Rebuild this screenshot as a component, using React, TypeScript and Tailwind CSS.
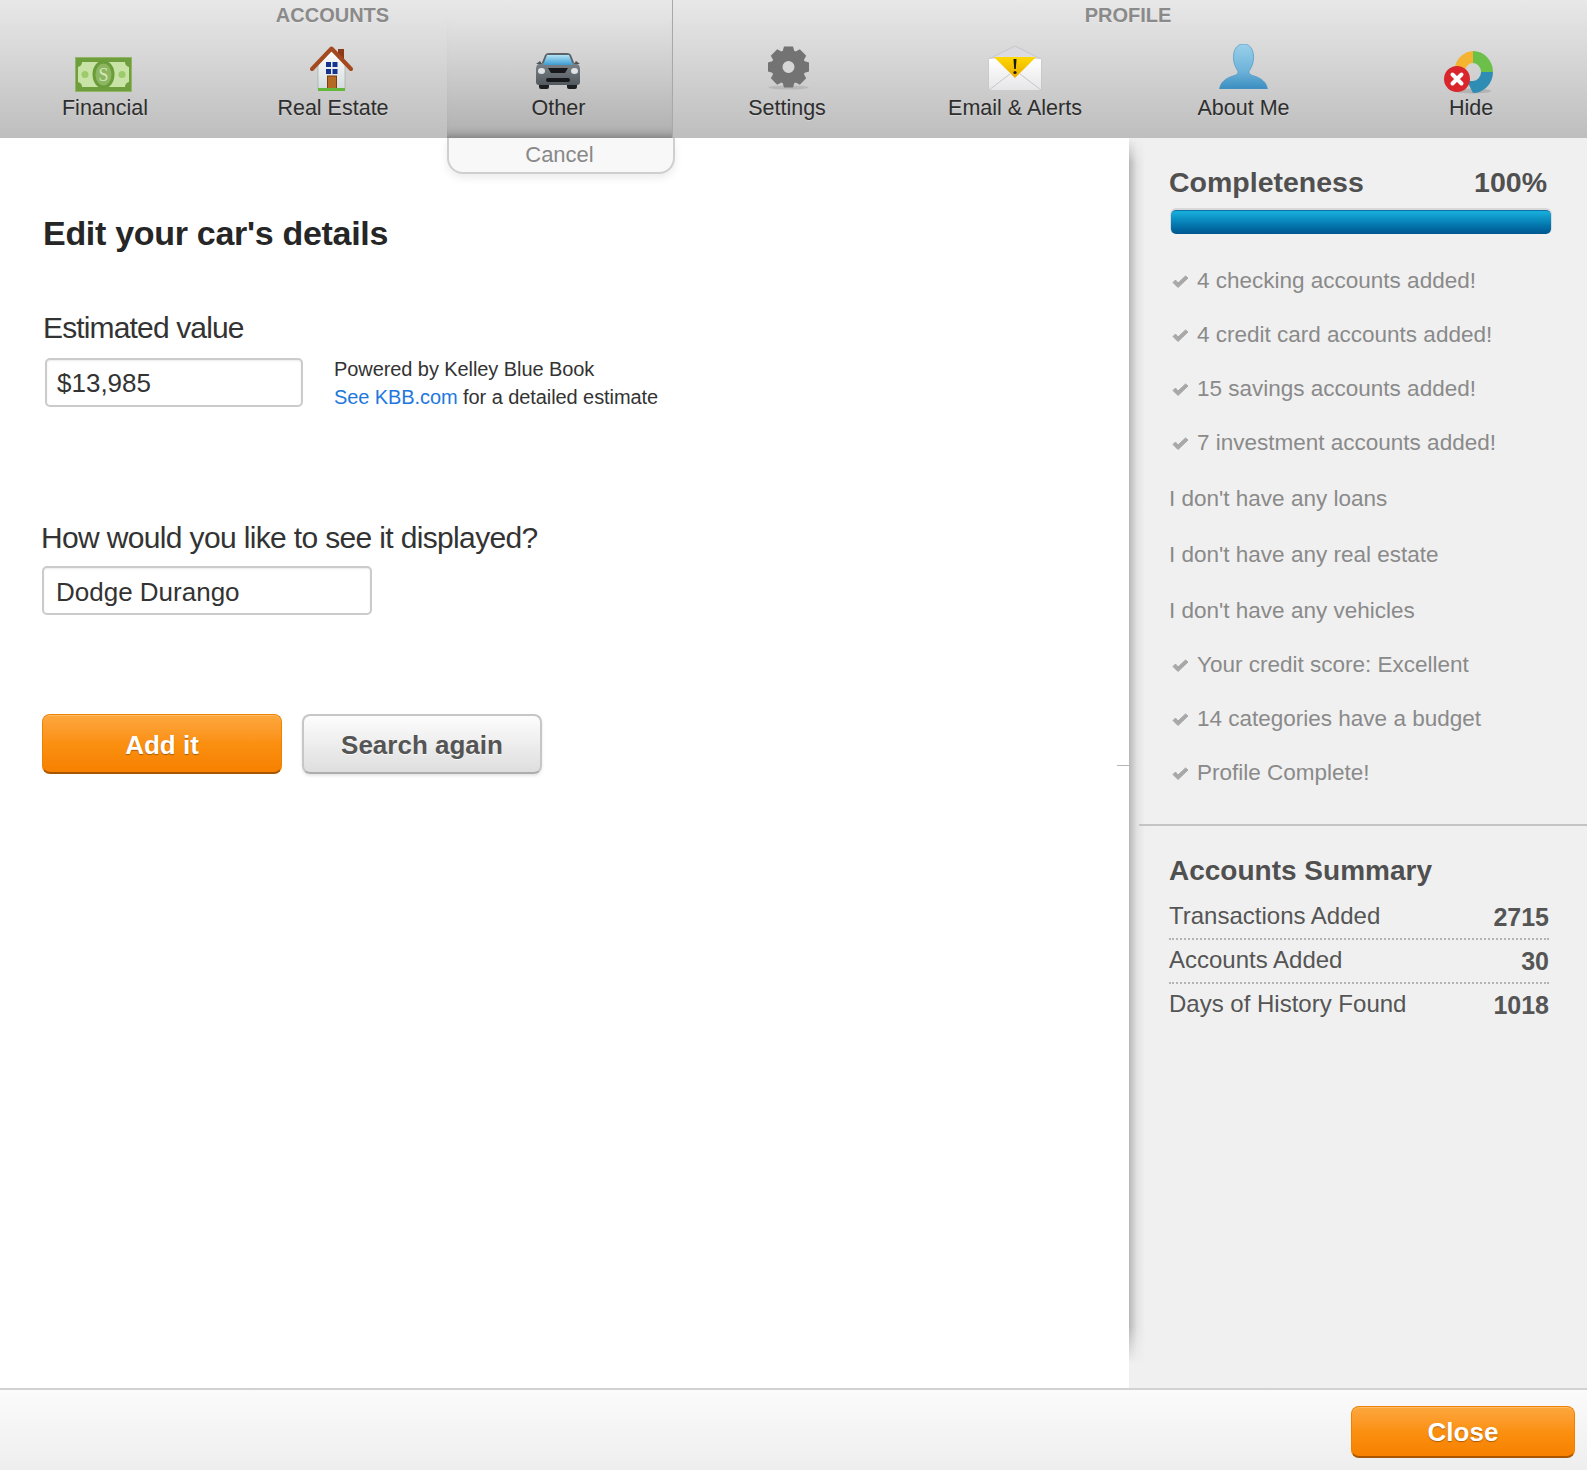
import React from "react";

const font = { fontFamily: '"Liberation Sans", Arial, sans-serif' };

function Money() {
  return (
    <svg width="57" height="35" viewBox="0 0 57 35">
      <rect width="57" height="35" fill="#6f9f3c" />
      <rect x="0.5" y="0.5" width="56" height="34" fill="none" stroke="#8fb765" />
      <path d="M7 5H50Q50 9 54 10V25Q50 26 50 30H7Q7 26 3 25V10Q7 9 7 5Z" fill="#c9e3a6" />
      <ellipse cx="28.5" cy="17.5" rx="11" ry="14" fill="#6b9c3a" />
      <ellipse cx="28.5" cy="17.5" rx="8" ry="11" fill="#8db662" />
      <text x="28.5" y="24" textAnchor="middle" fontSize="18" fontFamily="Liberation Serif, serif" fill="#d3e8b6">S</text>
      <circle cx="10" cy="17.5" r="3.5" fill="#9ccb6c" />
      <circle cx="47" cy="17.5" r="3.5" fill="#9ccb6c" />
    </svg>
  );
}

function House() {
  return (
    <svg width="43" height="45" viewBox="0 0 43 45">
      <defs>
        <linearGradient id="wall" x1="0" y1="0" x2="0" y2="1">
          <stop offset="0" stopColor="#ffffff" />
          <stop offset="1" stopColor="#d5dcdd" />
        </linearGradient>
      </defs>
      <rect x="28" y="3" width="6" height="12" fill="#8c3a1a" />
      <path d="M8 19L21.5 4L35 19V43H8Z" fill="url(#wall)" stroke="#9aa3a5" strokeWidth="0.6" />
      <path d="M2 23L21.5 2.5L41 23" fill="none" stroke="#a4491f" strokeWidth="4" strokeLinejoin="round" strokeLinecap="round" />
      <rect x="16" y="16" width="5" height="5" fill="#16338f" />
      <rect x="22.5" y="16" width="5" height="5" fill="#16338f" />
      <rect x="16" y="23" width="5" height="5" fill="#16338f" />
      <rect x="22.5" y="23" width="5" height="5" fill="#16338f" />
      <rect x="17.5" y="30" width="9" height="13" fill="#b56a24" stroke="#7b3d12" strokeWidth="1" />
      <rect x="8" y="42" width="27" height="3" fill="#63b83c" />
    </svg>
  );
}

function Car() {
  return (
    <svg width="46" height="36" viewBox="0 0 46 36">
      <defs>
        <linearGradient id="glass" x1="0" y1="0" x2="0" y2="1">
          <stop offset="0" stopColor="#b5e8fa" />
          <stop offset="1" stopColor="#3d9fd6" />
        </linearGradient>
        <linearGradient id="body" x1="0" y1="0" x2="0" y2="1">
          <stop offset="0" stopColor="#7e868c" />
          <stop offset="1" stopColor="#555c62" />
        </linearGradient>
      </defs>
      <rect x="4" y="28" width="10" height="8" rx="2" fill="#1d1f22" />
      <rect x="32" y="28" width="10" height="8" rx="2" fill="#1d1f22" />
      <path d="M10 2Q11 0 14 0H32Q35 0 36 2L40 12H6Z" fill="#5d656b" />
      <path d="M1 16Q1 11 6 10H40Q45 11 45 16V29Q45 32 42 32H4Q1 32 1 29Z" fill="url(#body)" />
      <path d="M12 2H34L38 12H8Z" fill="url(#glass)" />
      <path d="M1 11L5 8L7 11Z M45 11L41 8L39 11Z" fill="#4f565c" />
      <path d="M13 15H33L30 20H16Z" fill="#17191c" />
      <rect x="11" y="25" width="24" height="4" rx="2" fill="#17191c" />
      <ellipse cx="6.5" cy="18" rx="3.5" ry="3" fill="#e4e9ec" />
      <ellipse cx="39.5" cy="18" rx="3.5" ry="3" fill="#e4e9ec" />
    </svg>
  );
}

function Gear() {
  const teeth = [0, 45, 90, 135, 180, 225, 270, 315];
  return (
    <svg width="45" height="44" viewBox="0 0 45 44">
      <ellipse cx="22.5" cy="41.5" rx="20" ry="2" fill="#000" opacity="0.1" />
      {teeth.map((a) => (
        <path key={a} d="M18 0.5H27L29.5 9H15.5Z" fill="#737373" transform={`rotate(${a} 22.5 21)`} />
      ))}
      <circle cx="22.5" cy="21" r="11.5" fill="none" stroke="#737373" strokeWidth="11" />
      <circle cx="22.5" cy="21" r="5.5" fill="#d6d6d6" />
    </svg>
  );
}

function Mail() {
  return (
    <svg width="54" height="44" viewBox="0 0 54 44">
      <defs>
        <linearGradient id="env" x1="0" y1="0" x2="0" y2="1">
          <stop offset="0" stopColor="#ffffff" />
          <stop offset="1" stopColor="#e6e6e8" />
        </linearGradient>
        <linearGradient id="flap" x1="0" y1="0" x2="0" y2="1">
          <stop offset="0" stopColor="#ffd800" />
          <stop offset="1" stopColor="#e8a900" />
        </linearGradient>
      </defs>
      <path d="M1 13L27 0L53 13V44H1Z" fill="#dcdce0" stroke="#bfbfc6" strokeWidth="0.8" />
      <path d="M1 13H53V44H1Z" fill="url(#env)" />
      <path d="M6 11H48L27 32Z" fill="url(#flap)" />
      <path d="M1 44L22 28 M53 44L32 28" stroke="#c6c6cc" strokeWidth="1" />
      <path d="M25.5 13H28.5L27.8 23H26.2Z" fill="#1a1a1a" />
      <circle cx="27" cy="26.5" r="1.6" fill="#1a1a1a" />
    </svg>
  );
}

function Person() {
  return (
    <svg width="49" height="45" viewBox="0 0 49 45">
      <defs>
        <linearGradient id="pers" x1="0" y1="0" x2="0" y2="1">
          <stop offset="0" stopColor="#9ad0ea" />
          <stop offset="0.6" stopColor="#6db3d9" />
          <stop offset="1" stopColor="#3a8dc0" />
        </linearGradient>
      </defs>
      <path
        d="M24.5 0C16 0 14 9 14.5 15C15 21 17.5 25 19 27C19.5 30 17 31 14 32C7 34 1.5 38 0.5 45H48.5C47.5 38 42 34 35 32C32 31 29.5 30 30 27C31.5 25 34 21 34.5 15C35 9 33 0 24.5 0Z"
        fill="url(#pers)"
        stroke="#4c97c4"
        strokeWidth="0.7"
      />
    </svg>
  );
}

function Hide() {
  return (
    <svg width="50" height="44" viewBox="0 0 50 44">
      <ellipse cx="30" cy="41" rx="18" ry="2.5" fill="#000" opacity="0.12" />
      <path d="M30 1A20 21 0 0 1 50 22H38A8 9 0 0 0 30 13Z" fill="#6cc04a" />
      <path d="M50 22A20 21 0 0 1 30 43L24 31Q28 31 30 31A8 9 0 0 0 38 22Z" fill="#2f8db4" />
      <path d="M30 1A20 21 0 0 0 12 16L22 21A8 9 0 0 1 30 13Z" fill="#f4b431" />
      <circle cx="14" cy="29" r="13" fill="#d8262c" />
      <path d="M9.5 24.5L18.5 33.5M18.5 24.5L9.5 33.5" stroke="#fff" strokeWidth="4" strokeLinecap="round" />
    </svg>
  );
}

function NavItem({ label, icon, className }: { label: string; icon: React.ReactNode; className: string }) {
  return (
    <div className={`flex flex-col items-center ${className}`}>
      <div className="mt-[12px] h-[50px] flex items-end justify-center">{icon}</div>
      <div className="mt-[3px] text-[21.5px] leading-[26px] text-[#2e2e2e] whitespace-nowrap [text-shadow:0_1px_0_rgba(255,255,255,0.25)]">{label}</div>
    </div>
  );
}

function GroupTitle({ children }: { children: React.ReactNode }) {
  return (
    <div className="h-[30px] flex items-center justify-center text-[20px] font-bold leading-[30px] text-[#8a8a8a] [text-shadow:0_1px_0_rgba(255,255,255,0.3)]">
      {children}
    </div>
  );
}

function Check() {
  return (
    <svg width="17" height="14" viewBox="0 0 17 14" className="mr-[8px] mt-[3px] shrink-0">
      <path d="M1 7.5L6 12.5L16 3L13.5 1L6 8L3.5 5Z" fill="#a8a8a8" stroke="#a8a8a8" strokeWidth="1" strokeLinejoin="round" />
    </svg>
  );
}

const items: { text: string; done: boolean }[] = [
  { text: "4 checking accounts added!", done: true },
  { text: "4 credit card accounts added!", done: true },
  { text: "15 savings accounts added!", done: true },
  { text: "7 investment accounts added!", done: true },
  { text: "I don't have any loans", done: false },
  { text: "I don't have any real estate", done: false },
  { text: "I don't have any vehicles", done: false },
  { text: "Your credit score: Excellent", done: true },
  { text: "14 categories have a budget", done: true },
  { text: "Profile Complete!", done: true },
];

const summary = [
  { label: "Transactions Added", value: "2715" },
  { label: "Accounts Added", value: "30" },
  { label: "Days of History Found", value: "1018" },
];

export default function App() {
  return (
    <div style={font} className="w-[1587px] h-[1470px] flex flex-col overflow-hidden bg-white">
      <header className="relative z-20 h-[138px] flex shrink-0 bg-gradient-to-b from-[#e8e8e8] to-[#bebebe]">
        <div className="w-[673px] shrink-0 border-r border-r-[#a8a8a8] flex flex-col">
          <GroupTitle><span className="ml-[-7px]">ACCOUNTS</span></GroupTitle>
          <div className="flex-1 flex relative">
            <NavItem label="Financial" icon={<div className="ml-[-4px]"><Money /></div>} className="w-[210px]" />
            <NavItem label="Real Estate" icon={<div className="mb-[1px] ml-[-3px]"><House /></div>} className="w-[228px] ml-[9px]" />
            <NavItem label="Other" icon={<div className="mb-[3px] ml-[-1px]"><Car /></div>} className="w-[223px]" />
          </div>
          <div className="absolute left-[447px] top-[20px] w-[225px] h-[118px] pointer-events-none bg-gradient-to-b from-transparent via-[rgba(0,0,0,0.03)] to-[rgba(0,0,0,0.08)] shadow-[inset_0_-10px_10px_-8px_rgba(0,0,0,0.3)]" />
          <div className="absolute left-[447px] top-[138px] w-[228px] h-[36px] rounded-b-[16px] border-2 border-t-0 border-[#cfcfcf] bg-[#f8f8f8] shadow-[0_4px_8px_rgba(0,0,0,0.08)] flex items-center justify-center pr-[3px] text-[22px] leading-[30px] text-[#888]">
            Cancel
          </div>
        </div>
        <div className="flex-1 flex flex-col">
          <GroupTitle><span className="mr-[4px]">PROFILE</span></GroupTitle>
          <div className="flex-1 flex">
            <NavItem label="Settings" icon={<div className="mb-[2px] ml-[3px]"><Gear /></div>} className="w-[228px]" />
            <NavItem label="Email & Alerts" icon={<div className="mb-[2px]"><Mail /></div>} className="w-[228px]" />
            <NavItem label="About Me" icon={<div className="mb-[3px]"><Person /></div>} className="w-[229px]" />
            <NavItem label="Hide" icon={<div className="ml-[-6px] mb-[-2px]"><Hide /></div>} className="w-[226px]" />
          </div>
        </div>
      </header>

      <main className="flex-1 flex min-h-0">
        <section className="relative flex-1 pt-[75px] pl-[43px] text-[#333]">
          <h1 className="text-[34px] leading-[40px] font-bold text-[#262626] tracking-[-0.3px]">Edit your car's details</h1>

          <div className="mt-[57px] text-[30px] leading-[36px] text-[#333] tracking-[-0.85px]">Estimated value</div>
          <div className="mt-[12px] flex items-start">
            <div className="ml-[2px] w-[258px] h-[49px] rounded-[5px] border-2 border-[#cbcbcb] bg-white shadow-[inset_0_1px_2px_rgba(0,0,0,0.08)] flex items-center pl-[10px] pt-[1px] text-[26px] text-[#333]">
              $13,985
            </div>
            <div className="ml-[31px] -mt-[3px] text-[20px] leading-[28px] tracking-[-0.08px] text-[#333]">
              <div>Powered by Kelley Blue Book</div>
              <div><span className="text-[#2277dd]">See KBB.com</span> for a detailed estimate</div>
            </div>
          </div>

          <div className="ml-[-2px] mt-[109px] text-[30px] leading-[36px] text-[#333] tracking-[-0.65px]">How would you like to see it displayed?</div>
          <div className="ml-[-1px] mt-[10px] w-[330px] h-[49px] rounded-[5px] border-2 border-[#cbcbcb] bg-white shadow-[inset_0_1px_2px_rgba(0,0,0,0.08)] flex items-center pl-[12px] pt-[3px] text-[26px] text-[#333]">
            Dodge Durango
          </div>

          <div className="ml-[-1px] mt-[99px] flex gap-[20px]">
            <div className="w-[240px] h-[60px] rounded-[8px] border border-[#f08000] border-b-2 border-b-[#a85600] bg-gradient-to-b from-[#fda73c] via-[#fb9010] to-[#f78000] shadow-[inset_0_1px_0_rgba(255,255,255,0.25)] flex items-center justify-center pt-[3px] text-[26px] font-bold text-white [text-shadow:0_1px_1px_rgba(120,60,0,0.6)]">
              Add it
            </div>
            <div className="w-[240px] h-[60px] rounded-[8px] border-2 border-[#c6c6c6] border-b-[#adadad] bg-gradient-to-b from-[#fdfdfd] to-[#dedede] shadow-[0_2px_3px_rgba(0,0,0,0.1)] flex items-center justify-center pt-[3px] text-[26px] font-bold text-[#555] [text-shadow:0_1px_0_rgba(255,255,255,0.8)]">
              Search again
            </div>
          </div>

          <div className="absolute right-0 top-[627px] w-[12px] h-[1px] bg-[#b5b5b5]" />
        </section>

        <aside className="relative w-[458px] shrink-0 bg-[#f0f0f0] pt-[28px]">
          <div className="absolute left-0 top-0 bottom-[24px] w-[16px] bg-gradient-to-r from-[#b8b8b8] via-[#e2e2e2] to-transparent [mask-image:linear-gradient(to_bottom,transparent,black_2%,black_97%,transparent)]" />
          <div className="ml-[40px] mr-[38px]">
            <div className="flex justify-between h-[32px] items-center text-[28.5px] font-bold leading-[32px] text-[#505050] pr-[2px]">
              <span>Completeness</span>
              <span>100%</span>
            </div>
            <div className="ml-[2px] mr-[-2px] mt-[12px] h-[24px] rounded-[5px] bg-gradient-to-b from-[#18b0de] to-[#00558f] border-t border-t-[#0b6ea6] shadow-[0_-1px_0_1px_#d8d8d8]" />
            <ul className="mt-[19px] text-[22.5px] text-[#8a8a8a]">
              {items.map((item) => (
                <li key={item.text} className={item.done ? "h-[54px] flex items-center pl-[3px]" : "h-[56px] flex items-center"}>
                  {item.done && <Check />}
                  <span className={item.done ? "mt-[2px]" : "mt-[4px]"}>{item.text}</span>
                </li>
              ))}
            </ul>
          </div>
          <div className="relative z-10 ml-[10px] mt-[25px] h-[2px] bg-[#c4c4c4]" />
          <div className="ml-[40px] mr-[38px] mt-[27px]">
            <h2 className="text-[28px] font-bold leading-[36px] text-[#505050]">Accounts Summary</h2>
            <div className="mt-[7px]">
              {summary.map((row, i) => (
                <div
                  key={row.label}
                  className={
                    i < 2
                      ? "h-[44px] flex justify-between border-b-2 border-dotted border-[#b4b4b4] text-[24px] leading-[40px] text-[#555]"
                      : "h-[44px] flex justify-between text-[24px] leading-[40px] text-[#555]"
                  }
                >
                  <span>{row.label}</span>
                  <span className="font-bold text-[25px] mt-[1px]">{row.value}</span>
                </div>
              ))}
            </div>
          </div>
        </aside>
      </main>

      <footer className="h-[82px] shrink-0 border-t-2 border-t-[#d2d2d2] bg-gradient-to-b from-[#fbfbfb] to-[#eeeeee] flex justify-end pt-[16px] pr-[12px]">
        <div className="w-[224px] h-[52px] rounded-[8px] border border-[#f08000] border-b-2 border-b-[#a85600] bg-gradient-to-b from-[#fda73c] via-[#fb9010] to-[#f78000] shadow-[inset_0_1px_0_rgba(255,255,255,0.25)] flex items-center justify-center pt-[1px] text-[26px] font-bold text-white [text-shadow:0_1px_1px_rgba(120,60,0,0.6)]">
          Close
        </div>
      </footer>
    </div>
  );
}
